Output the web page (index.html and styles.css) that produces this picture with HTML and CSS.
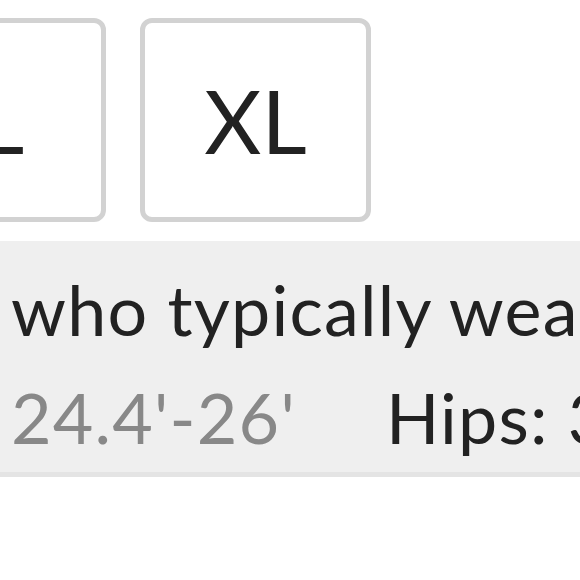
FILE: index.html
```html
<!DOCTYPE html>
<html lang="en">
<head>
    <meta charset="UTF-8">
    <title>Size guide</title>
    <link rel="stylesheet" href="styles.css">
</head>
<body>
    <div class="sizes">
        <button class="size size-l">L</button>
        <button class="size">XL</button>
    </div>
    <div class="fit">
        <p class="fit-line">who typically wear size</p>
        <p class="fit-line"><span class="range">24.4'-26'</span><span class="label">Hips: 35'-37'</span></p>
    </div>
</body>
</html>
```

FILE: styles.css
```css
* {
    margin: 0;
    padding: 0;
    box-sizing: border-box;
}
body {
    background-color: #fff;
    font-family: Lato, "Open Sans", sans-serif;
    color: #222;
    overflow: hidden;
}
.sizes {
    display: flex;
    gap: 34px;
    margin-left: -103px;
    padding-top: 18px;
}
.size {
    flex: none;
    width: 231px;
    height: 204px;
    border: 5px solid #d2d2d2;
    border-radius: 12px;
    background-color: #fff;
    font-family: Lato, "Open Sans", sans-serif;
    font-size: 88px;
    color: #222;
}
.size-l {
    width: 209px;
}
.fit {
    margin-top: 19px;
    padding: 14px 0 1px 11px;
    background-color: #efefef;
    border-bottom: 5px solid #e4e4e4;
}
.fit-line {
    font-size: 70px;
    line-height: 108px;
    letter-spacing: 1.2px;
    white-space: nowrap;
    overflow: hidden;
}
.range {
    color: #888;
}
.label {
    margin-left: 90px;
}
```
